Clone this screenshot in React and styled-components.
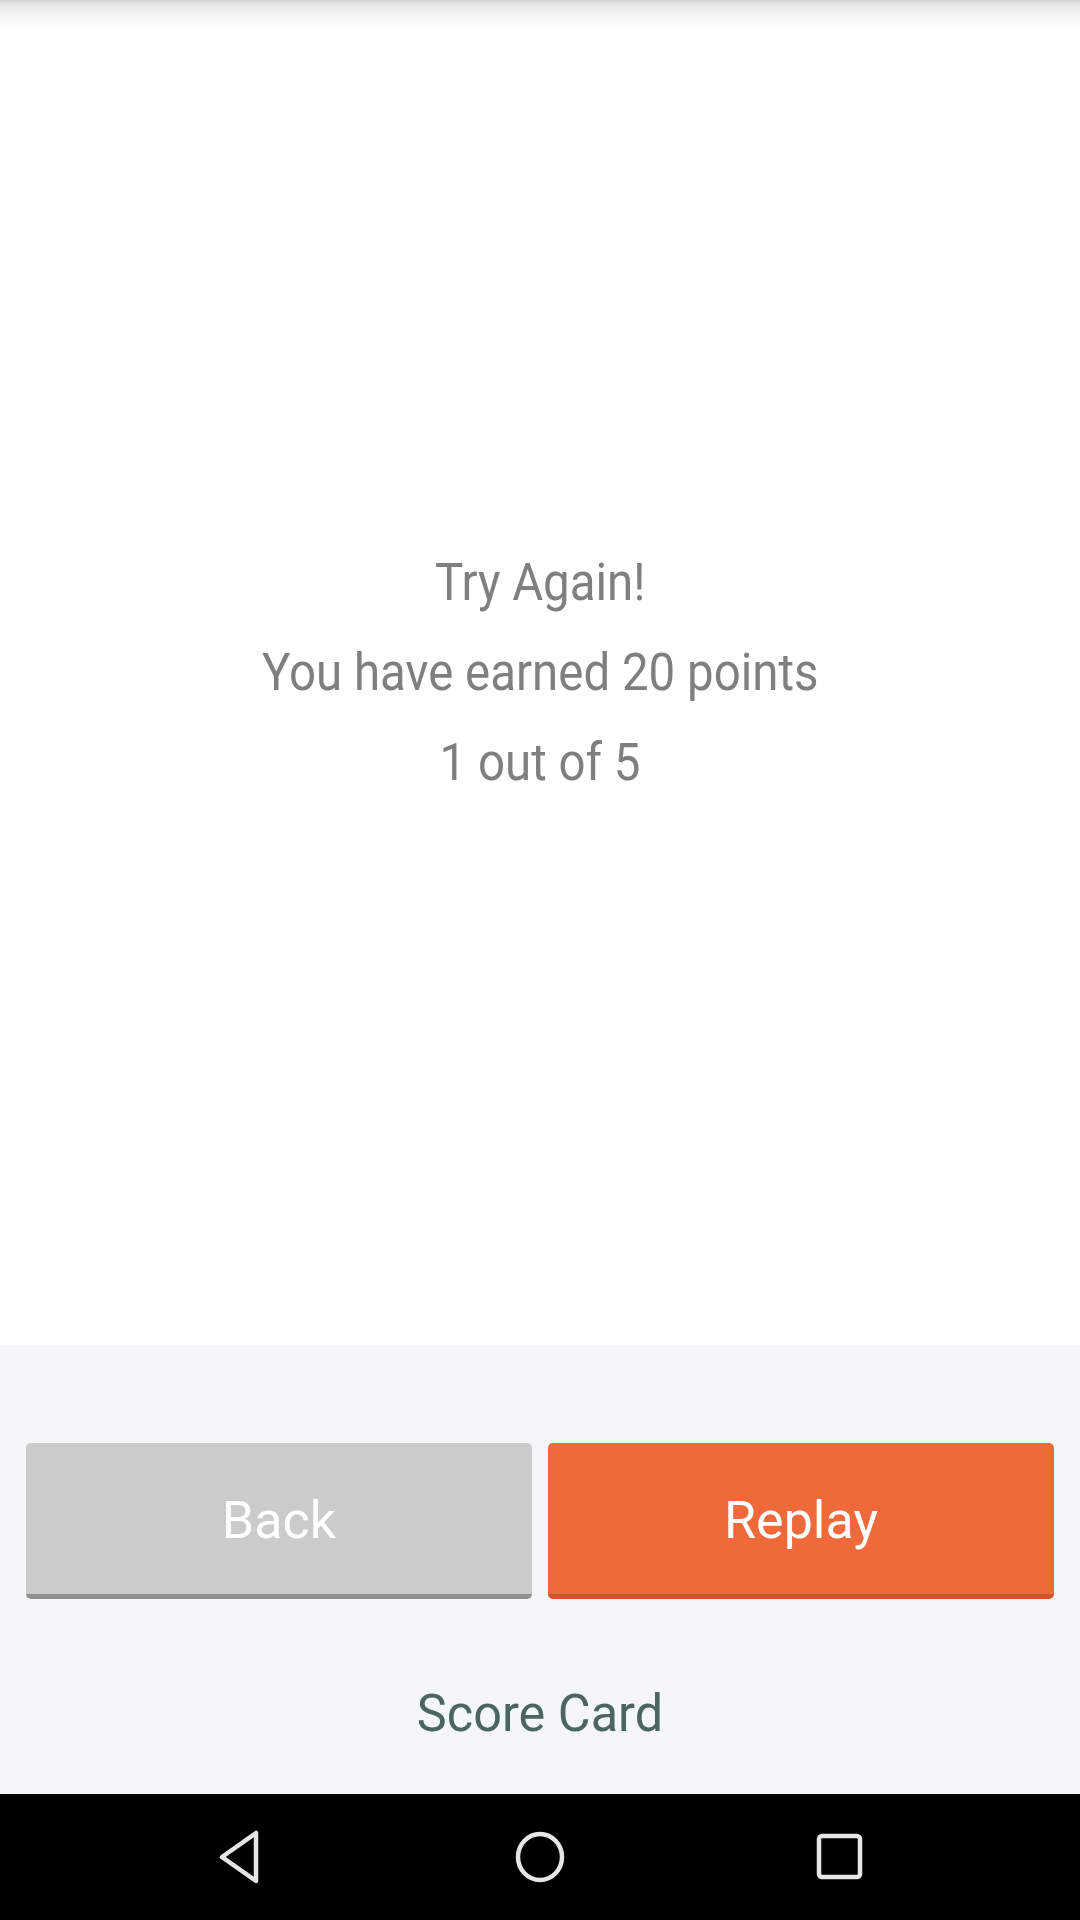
import React from 'react';
import styled, { createGlobalStyle } from 'styled-components';

const GlobalStyle = createGlobalStyle`
  html, body {
    margin: 0;
    padding: 0;
    background: #fff;
  }
  body {
    font-family: Roboto, 'Liberation Sans', sans-serif;
  }
`;

const Screen = styled.div`
  width: 1080px;
  height: 1920px;
  display: flex;
  flex-direction: column;
  overflow: hidden;
`;

const ResultArea = styled.main`
  height: 1345px;
  display: flex;
  flex-direction: column;
  align-items: center;
  justify-content: center;
  background: linear-gradient(
    #cfcfcf 0,
    #e4e4e4 3px,
    #f1f1f1 12px,
    #fbfbfb 24px,
    #ffffff 32px
  );
`;

const ResultLine = styled.p`
  margin: 0;
  font-size: 51px;
  line-height: 90px;
  color: #7f7f7f;
  text-align: center;
  transform: scaleX(0.93);
`;

const ActionArea = styled.section`
  height: 449px;
  box-sizing: border-box;
  padding: 98px 26px 0;
  background: #f5f6f8;
  display: flex;
  flex-direction: column;
`;

const ButtonRow = styled.div`
  display: grid;
  grid-template-columns: 1fr 1fr;
  gap: 16px;
`;

const ActionButton = styled.button`
  height: 156px;
  box-sizing: border-box;
  padding: 4px 0 0;
  border: none;
  border-bottom: 5px solid ${(p) => (p.$primary ? '#d3532b' : '#8f9090')};
  border-radius: 5px;
  background: ${(p) => (p.$primary ? '#f0693a' : '#cbcbcb')};
  color: #ffffff;
  font-family: Roboto, 'Liberation Sans', sans-serif;
  font-size: 52px;
  line-height: 1;
  cursor: pointer;
`;

const ScoreCardLink = styled.div`
  margin-top: 85px;
  font-size: 52px;
  line-height: 60px;
  color: #4b6560;
  text-align: center;
  transform: scaleX(0.97);
`;

const NavBar = styled.nav`
  flex: 1;
  background: #000;
  display: flex;
  align-items: center;
  justify-content: center;
  color: #e6e6e6;
`;

const NavSlot = styled.div`
  width: 300px;
  display: flex;
  justify-content: center;
  align-items: center;
  height: 60px;
`;

const BackIcon = () => (
  <svg width="48" height="54" viewBox="0 0 48 54">
    <path
      d="M40 3 L40 51 L6 27 Z"
      fill="none"
      stroke="currentColor"
      strokeWidth="4.5"
      strokeLinejoin="round"
    />
  </svg>
);

const HomeIcon = () => (
  <svg width="52" height="54" viewBox="0 0 52 54">
    <ellipse cx="26" cy="27" rx="22" ry="23" fill="none" stroke="currentColor" strokeWidth="4.5" />
  </svg>
);

const RecentsIcon = () => (
  <svg width="48" height="48" viewBox="0 0 48 48">
    <rect x="3" y="3" width="41" height="41" rx="3" fill="none" stroke="currentColor" strokeWidth="4.5" />
  </svg>
);

export default function App() {
  return (
    <>
      <GlobalStyle />
      <Screen>
        <ResultArea>
          <ResultLine>Try Again!</ResultLine>
          <ResultLine>You have earned 20 points</ResultLine>
          <ResultLine>1 out of 5</ResultLine>
        </ResultArea>
        <ActionArea>
          <ButtonRow>
            <ActionButton type="button">Back</ActionButton>
            <ActionButton type="button" $primary>
              Replay
            </ActionButton>
          </ButtonRow>
          <ScoreCardLink>Score Card</ScoreCardLink>
        </ActionArea>
        <NavBar>
          <NavSlot>
            <BackIcon />
          </NavSlot>
          <NavSlot>
            <HomeIcon />
          </NavSlot>
          <NavSlot>
            <RecentsIcon />
          </NavSlot>
        </NavBar>
      </Screen>
    </>
  );
}
